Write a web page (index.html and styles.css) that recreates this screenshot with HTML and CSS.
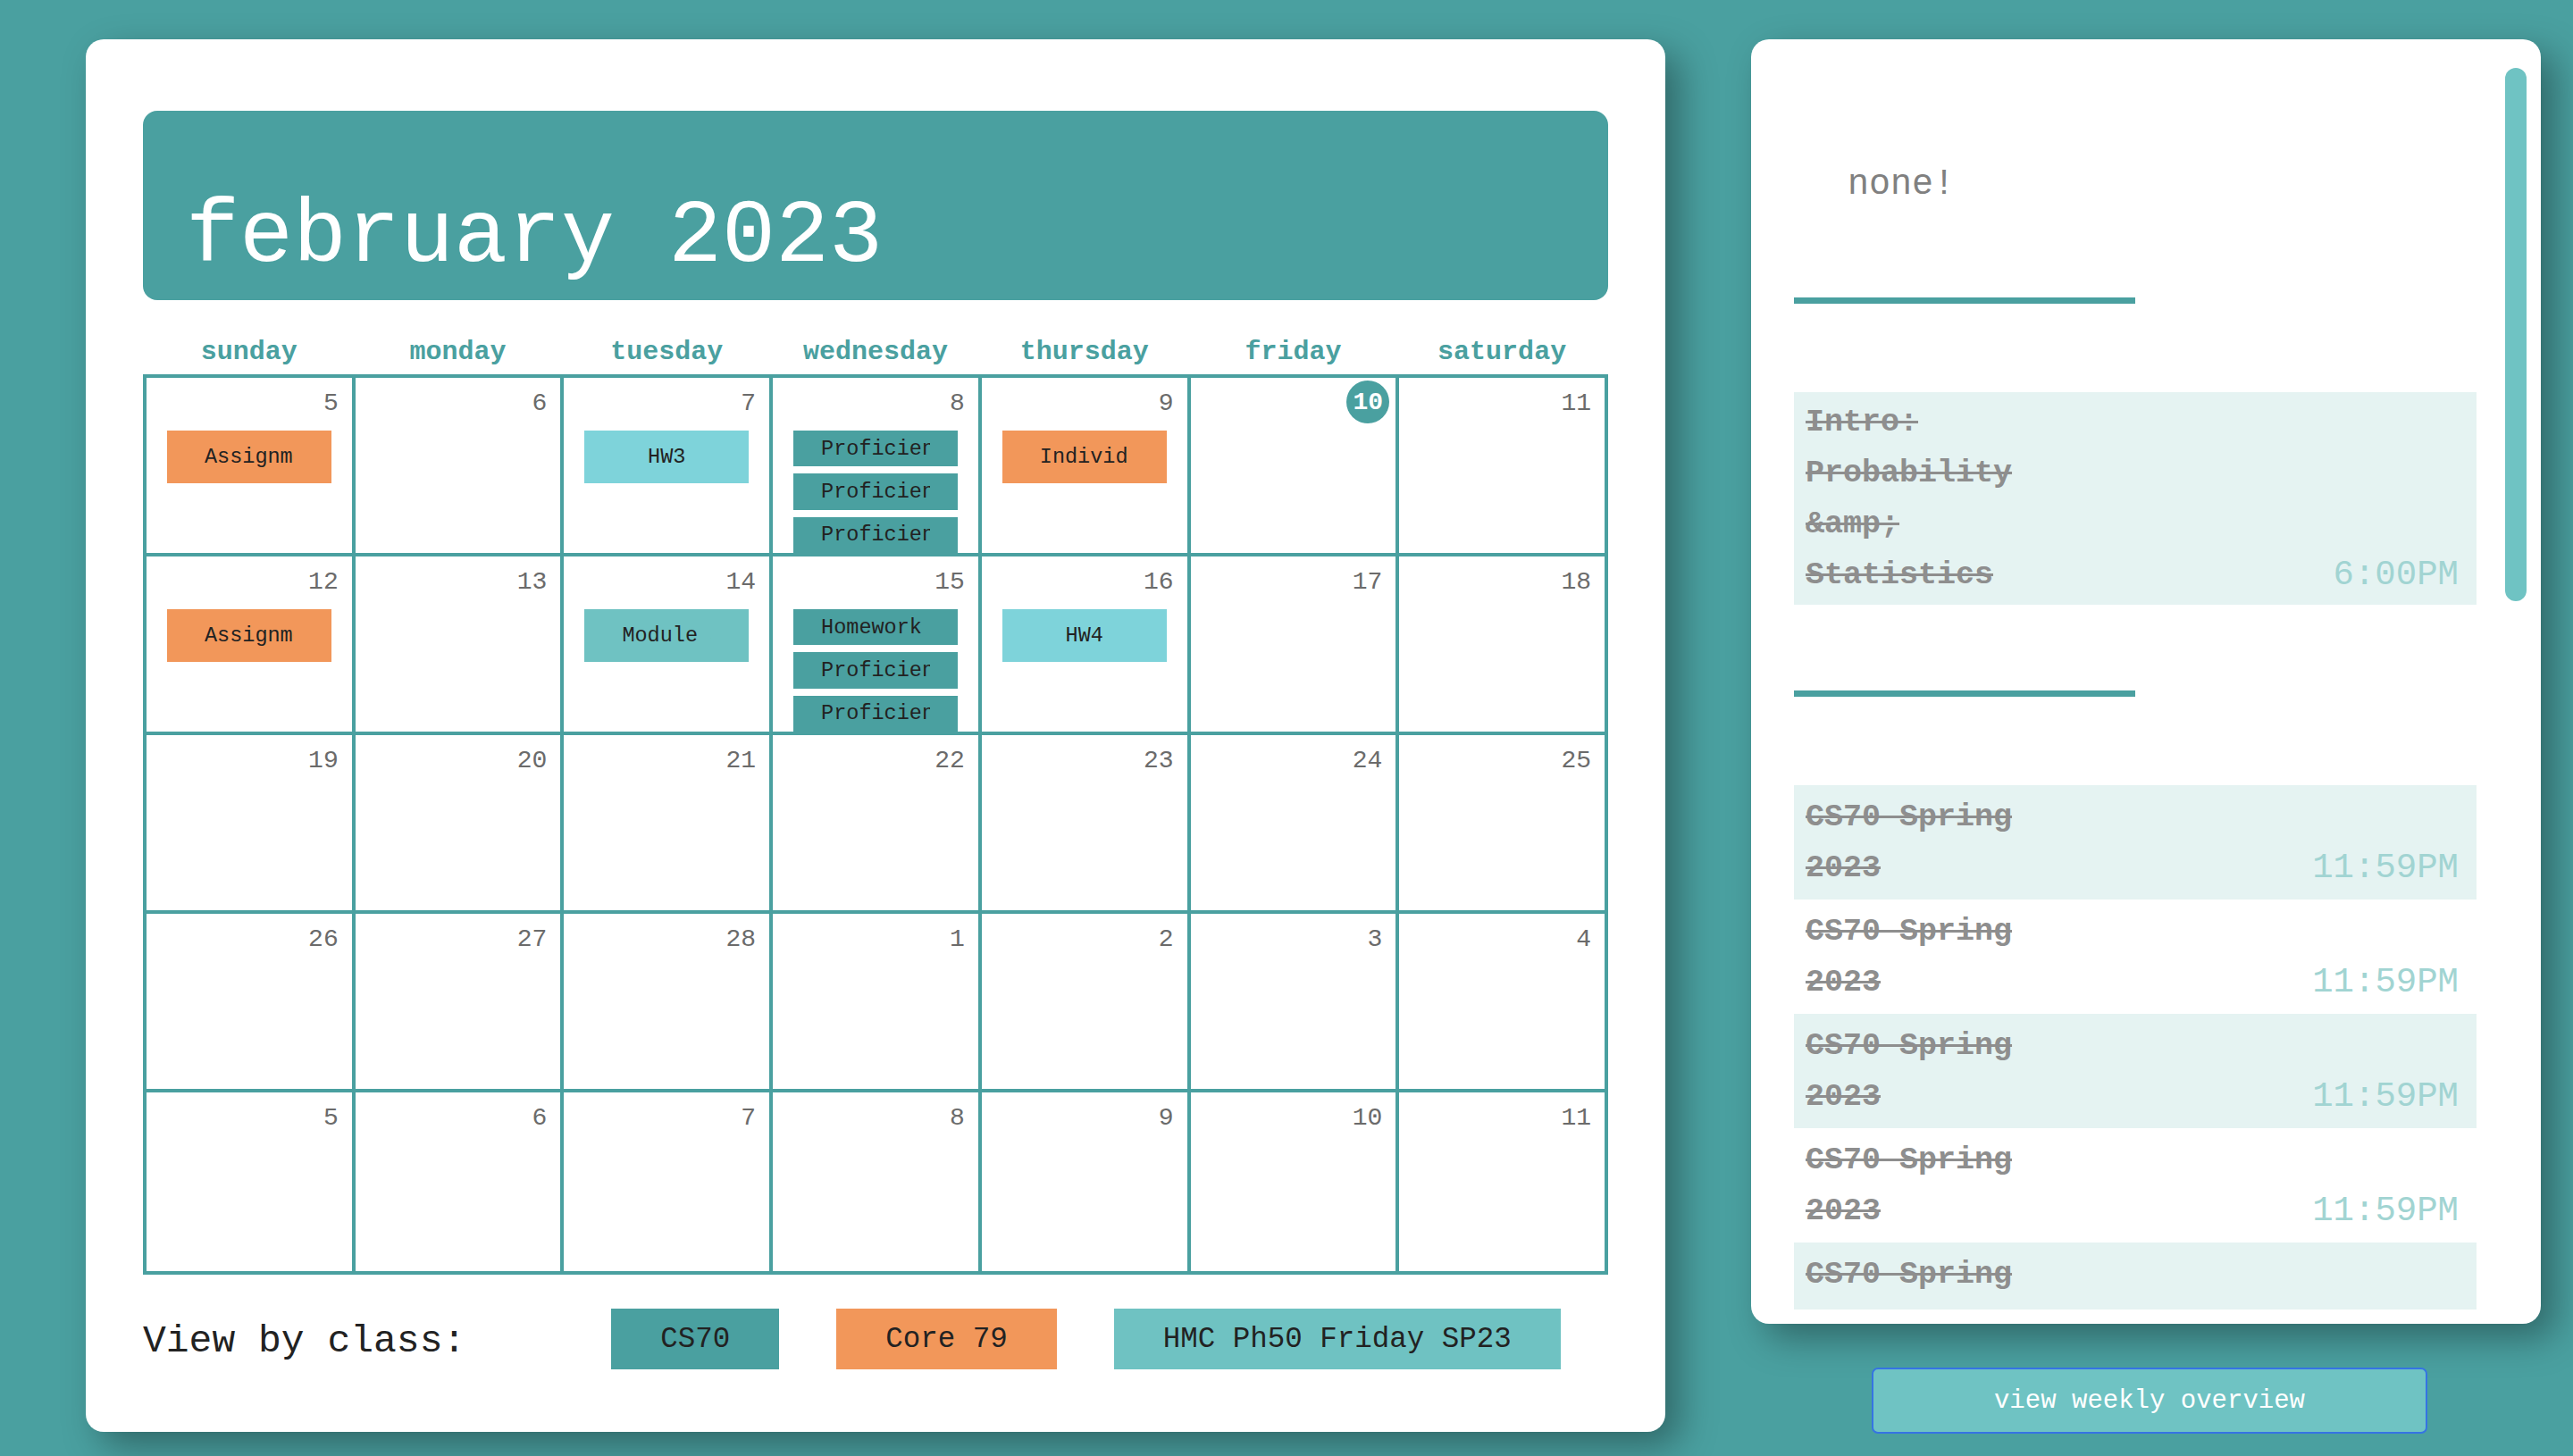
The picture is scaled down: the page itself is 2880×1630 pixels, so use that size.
FILE: index.html
```html
<!DOCTYPE html>
<html lang="en">
<head>
<meta charset="utf-8">
<title>Calendar</title>
<link rel="stylesheet" href="styles.css">
</head>
<body>
<div class="page">
  <section class="cal-card">
    <header class="month"><h1 class="month-title">february 2023</h1></header>
    <div class="weekdays">
      <div class="weekday">sunday</div>
      <div class="weekday">monday</div>
      <div class="weekday">tuesday</div>
      <div class="weekday">wednesday</div>
      <div class="weekday">thursday</div>
      <div class="weekday">friday</div>
      <div class="weekday">saturday</div>
    </div>
    <div class="grid">
      <div class="cell"><div class="num"><span>5</span></div><div class="events"><div class="event orange"><span>Assignment 3</span></div></div></div>
      <div class="cell"><div class="num"><span>6</span></div></div>
      <div class="cell"><div class="num"><span>7</span></div><div class="events"><div class="event cyan"><span>HW3</span></div></div></div>
      <div class="cell"><div class="num"><span>8</span></div><div class="events stack"><div class="event teal"><span>Proficiency 1</span></div><div class="event teal"><span>Proficiency 2</span></div><div class="event teal"><span>Proficiency 3</span></div></div></div>
      <div class="cell"><div class="num"><span>9</span></div><div class="events"><div class="event orange"><span>Individual</span></div></div></div>
      <div class="cell"><div class="num"><span class="today">10</span></div></div>
      <div class="cell"><div class="num"><span>11</span></div></div>

      <div class="cell"><div class="num"><span>12</span></div><div class="events"><div class="event orange"><span>Assignment 4</span></div></div></div>
      <div class="cell"><div class="num"><span>13</span></div></div>
      <div class="cell"><div class="num"><span>14</span></div><div class="events"><div class="event mint"><span>Module 3</span></div></div></div>
      <div class="cell"><div class="num"><span>15</span></div><div class="events stack"><div class="event teal"><span>Homework 4</span></div><div class="event teal"><span>Proficiency 4</span></div><div class="event teal"><span>Proficiency 5</span></div></div></div>
      <div class="cell"><div class="num"><span>16</span></div><div class="events"><div class="event cyan"><span>HW4</span></div></div></div>
      <div class="cell"><div class="num"><span>17</span></div></div>
      <div class="cell"><div class="num"><span>18</span></div></div>

      <div class="cell"><div class="num"><span>19</span></div></div>
      <div class="cell"><div class="num"><span>20</span></div></div>
      <div class="cell"><div class="num"><span>21</span></div></div>
      <div class="cell"><div class="num"><span>22</span></div></div>
      <div class="cell"><div class="num"><span>23</span></div></div>
      <div class="cell"><div class="num"><span>24</span></div></div>
      <div class="cell"><div class="num"><span>25</span></div></div>

      <div class="cell"><div class="num"><span>26</span></div></div>
      <div class="cell"><div class="num"><span>27</span></div></div>
      <div class="cell"><div class="num"><span>28</span></div></div>
      <div class="cell"><div class="num"><span>1</span></div></div>
      <div class="cell"><div class="num"><span>2</span></div></div>
      <div class="cell"><div class="num"><span>3</span></div></div>
      <div class="cell"><div class="num"><span>4</span></div></div>

      <div class="cell"><div class="num"><span>5</span></div></div>
      <div class="cell"><div class="num"><span>6</span></div></div>
      <div class="cell"><div class="num"><span>7</span></div></div>
      <div class="cell"><div class="num"><span>8</span></div></div>
      <div class="cell"><div class="num"><span>9</span></div></div>
      <div class="cell"><div class="num"><span>10</span></div></div>
      <div class="cell"><div class="num"><span>11</span></div></div>
    </div>
    <div class="classes">
      <span class="classes-label">View by class:</span>
      <button class="class-btn teal">CS70</button>
      <button class="class-btn orange">Core 79</button>
      <button class="class-btn mint">HMC Ph50 Friday SP23</button>
    </div>
  </section>

  <aside class="side">
    <div class="side-card">
      <div class="scroll">
        <p class="none">none!</p>
        <div class="rule rule-1"></div>
        <div class="item alt tall">
          <div class="item-name">Intro: Probability &amp;amp; Statistics</div>
          <div class="item-time">6:00PM</div>
        </div>
        <div class="rule rule-2"></div>
        <div class="list">
          <div class="item alt"><div class="item-name">CS70 Spring 2023</div><div class="item-time">11:59PM</div></div>
          <div class="item"><div class="item-name">CS70 Spring 2023</div><div class="item-time">11:59PM</div></div>
          <div class="item alt"><div class="item-name">CS70 Spring 2023</div><div class="item-time">11:59PM</div></div>
          <div class="item"><div class="item-name">CS70 Spring 2023</div><div class="item-time">11:59PM</div></div>
          <div class="item alt"><div class="item-name">CS70 Spring 2023</div><div class="item-time">11:59PM</div></div>
          <div class="item"><div class="item-name">CS70 Spring 2023</div><div class="item-time">11:59PM</div></div>
          <div class="item alt"><div class="item-name">CS70 Spring 2023</div><div class="item-time">11:59PM</div></div>
          <div class="item"><div class="item-name">CS70 Spring 2023</div><div class="item-time">11:59PM</div></div>
        </div>
      </div>
      <div class="scrollbar"><div class="scrollbar-thumb"></div></div>
    </div>
    <button class="weekly-btn">view weekly overview</button>
  </aside>
</div>
</body>
</html>
```

FILE: styles.css
```css
html, body {
  margin: 0;
  padding: 0;
}

body {
  width: 2880px;
  height: 1630px;
  overflow: hidden;
  background: #4aa0a0;
  font-family: "Liberation Mono", "DejaVu Sans Mono", monospace;
}

.page {
  display: flex;
  align-items: flex-start;
  gap: 96px;
  padding: 44px 0 0 96px;
}

/* ---------- calendar card ---------- */
.cal-card {
  width: 1768px;
  flex-shrink: 0;
  box-sizing: border-box;
  padding: 80px 64px 70px;
  background: #ffffff;
  border-radius: 20px;
  box-shadow: 16px 16px 40px rgba(0, 0, 0, 0.35);
}

.month {
  height: 212px;
  box-sizing: border-box;
  display: flex;
  align-items: flex-end;
  padding: 0 40px 14px 48px;
  background: #4aa0a0;
  border-radius: 16px;
}

.month-title {
  margin: 0;
  font-size: 100px;
  font-weight: 400;
  line-height: 113px;
  color: #ffffff;
}

.weekdays {
  display: grid;
  grid-template-columns: repeat(7, 1fr);
  gap: 4px;
  padding: 0 4px;
  margin: 41px 0 8px;
}

.weekday {
  text-align: center;
  font-size: 30px;
  font-weight: 700;
  line-height: 34px;
  color: #4aa0a0;
}

.grid {
  display: grid;
  grid-template-columns: repeat(7, 1fr);
  grid-template-rows: repeat(4, 196px) 200px;
  gap: 4px;
  padding: 4px;
  background: #4aa0a0;
}

.cell {
  min-width: 0;
  overflow: hidden;
  display: flex;
  flex-direction: column;
  padding-top: 12px;
  background: #ffffff;
}

.num {
  height: 32px;
  flex-shrink: 0;
  display: flex;
  justify-content: flex-end;
  align-items: center;
  padding-right: 15px;
  font-size: 28px;
  color: #6b6b6b;
}

.num .today {
  width: 48px;
  height: 48px;
  flex-shrink: 0;
  margin: -2px -8px 0 0;
  display: flex;
  align-items: center;
  justify-content: center;
  border-radius: 50%;
  background: #4aa0a0;
  color: #ffffff;
  font-weight: 700;
}

.events {
  flex: 1;
  min-height: 0;
  margin-top: 15px;
  display: flex;
  flex-direction: column;
  align-items: center;
  gap: 8px;
}

.event {
  width: 80%;
  height: 59px;
  min-height: 0;
  flex-shrink: 1;
  box-sizing: border-box;
  display: flex;
  align-items: center;
  padding: 0 42px;
  font-size: 23.5px;
  color: #222222;
}

.events.stack .event {
  padding: 0 31px;
}

.event span {
  display: block;
  width: 100%;
  overflow: hidden;
  white-space: nowrap;
  text-align: center;
}

.orange { background: #f2975a; }
.cyan { background: #7ed3da; }
.teal { background: #4aa0a0; }
.mint { background: #6fc2c2; }

.classes {
  display: flex;
  align-items: center;
  height: 68px;
  margin-top: 38px;
  white-space: nowrap;
}

.classes-label {
  flex-shrink: 0;
  margin: 5px 163px 0 0;
  font-size: 43px;
  color: #222222;
}

.class-btn {
  flex-shrink: 0;
  height: 68px;
  margin-right: 64px;
  padding: 0 55px;
  border: 0;
  white-space: nowrap;
  font-family: inherit;
  font-size: 32.5px;
  color: #222222;
}

/* ---------- side panel ---------- */
.side {
  width: 884px;
  flex-shrink: 0;
  display: flex;
  flex-direction: column;
  align-items: center;
}

.side-card {
  width: 884px;
  height: 1438px;
  box-sizing: border-box;
  display: flex;
  padding: 32px 16px 16px 48px;
  background: #ffffff;
  border-radius: 20px;
  box-shadow: 16px 16px 40px rgba(0, 0, 0, 0.35);
}

.scroll {
  flex: 1;
  min-width: 0;
  height: 1390px;
  overflow: hidden;
}

.scrollbar {
  width: 24px;
  flex-shrink: 0;
}

.scrollbar-thumb {
  height: 597px;
  border-radius: 12px;
  background: #6fc3c3;
}

.none {
  margin: 108px 0 0;
  padding-left: 60px;
  font-size: 40px;
  line-height: 45px;
  color: #808080;
}

.rule {
  width: 382px;
  height: 7px;
  background: #4aa0a0;
}

.rule-1 { margin-top: 104px; }
.rule-2 { margin-top: 96px; }

.list {
  margin-top: 99px;
}

.item {
  width: 764px;
  box-sizing: border-box;
  display: flex;
  justify-content: space-between;
  align-items: flex-end;
  padding: 8px 20px 6px 13px;
}

.item.alt {
  background: #e5f3f2;
}

.item.tall {
  margin-top: 99px;
  padding: 6px 20px 4px 13px;
}

.item-name {
  width: 300px;
  font-size: 35px;
  font-weight: 700;
  line-height: 57px;
  color: #8e8e8e;
  text-decoration: line-through;
}

.item-time {
  font-size: 39px;
  line-height: 57px;
  color: #a1d4d2;
}

.weekly-btn {
  width: 622px;
  height: 74px;
  box-sizing: border-box;
  margin: 49px 0 0 8px;
  border: 2px solid #3574e3;
  border-radius: 7px;
  background: #6fc3c3;
  font-family: inherit;
  font-size: 29px;
  color: #ffffff;
}
```
